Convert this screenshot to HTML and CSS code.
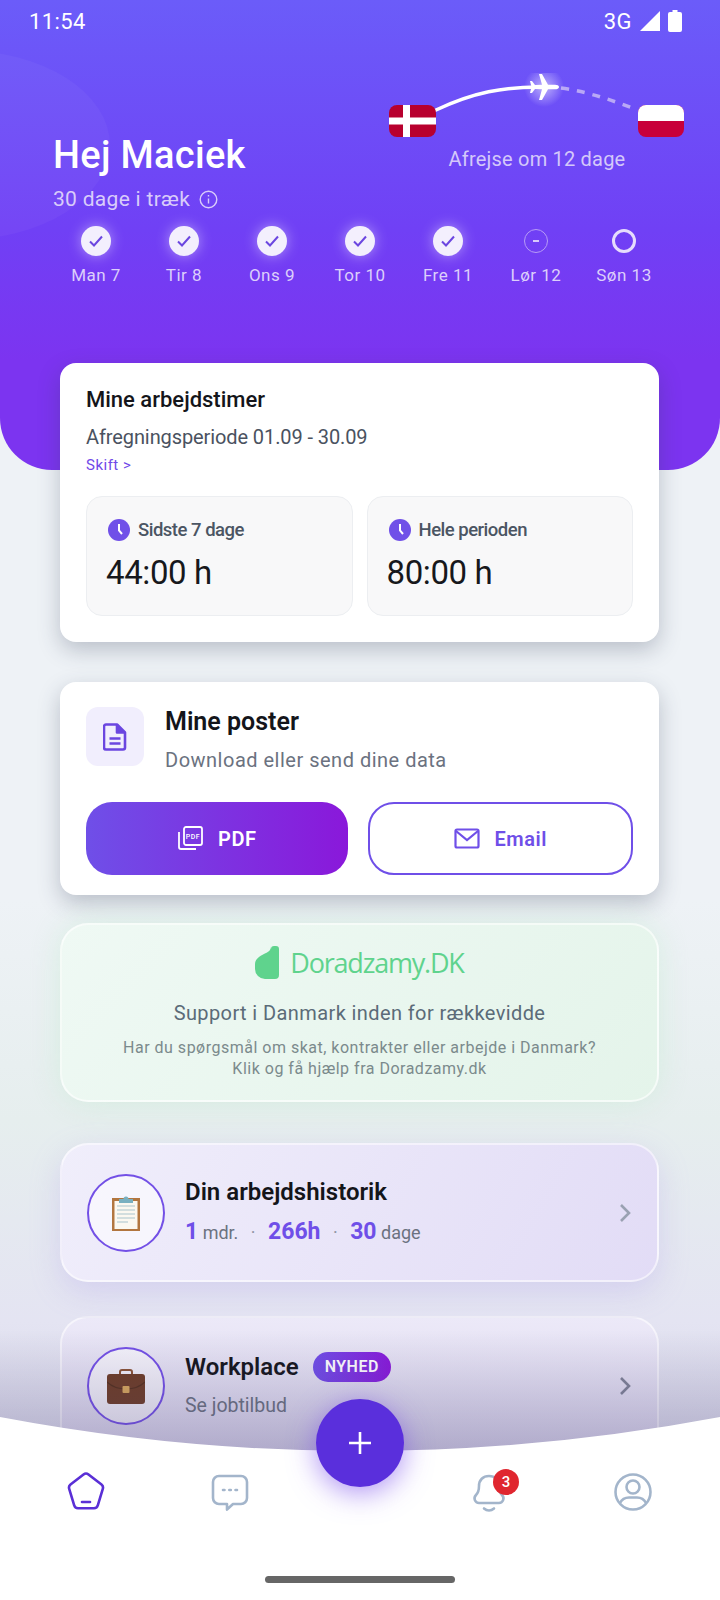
FILE: index.html
```html
<!DOCTYPE html>
<html lang="da">
<head>
    <meta charset="UTF-8">
    <meta name="viewport" content="width=device-width, initial-scale=1.0">
    <title>Hej Maciek</title>
    <link rel="stylesheet" href="styles.css">
</head>
<body>
<div class="screen">

    <header class="hero">
        <div class="status">
            <span>11:54</span>
            <div class="status-right">
                <span>3G</span>
                <svg width="22" height="22" viewBox="0 0 22 22"><path d="M21 1v20H1z" fill="#fff"/></svg>
                <svg width="14" height="22" viewBox="0 0 14 22"><path d="M4.500 0h5v2h2.500a2 2 0 0 1 2 2v16a2 2 0 0 1-2 2h-10a2 2 0 0 1-2-2v-16a2 2 0 0 1 2-2h2.500z" fill="#fff"/></svg>
            </div>
        </div>

        <div class="hero-top">
            <div class="greeting">
                <h1>Hej Maciek</h1>
                <p>30 dage i træk
                    <svg width="19" height="19" viewBox="0 0 19 19" fill="none" stroke="#d9ccfa" stroke-width="1.400"><circle cx="9.500" cy="9.500" r="8.300"/><path d="M9.500 8.500v5M9.500 5v1.600"/></svg>
                </p>
            </div>
            <div class="route">
                <svg class="route-map" width="296" height="66" viewBox="0 0 296 66">
                    <defs>
                        <radialGradient id="glow"><stop offset="0" stop-color="#fff" stop-opacity=".55"/><stop offset="1" stop-color="#fff" stop-opacity="0"/></radialGradient>
                    </defs>
                    <path d="M47 37C85 19 115 14 150 14" fill="none" stroke="#fff" stroke-width="3.500" stroke-linecap="round"/>
                    <path d="M172 15C200 19 222 27 246 36" fill="none" stroke="#b9a8f6" stroke-width="3.500" stroke-dasharray="8 8"/>
                    <circle cx="155" cy="14" r="20" fill="url(#glow)"/>
                    <path d="M170 14c0-1.500-2-2.300-4-2.300l-7 0-6-10.700h-3l3 10.700-7 .3-3-4h-2l1.500 6-1.500 6h2l3-4 7 .3-3 10.700h3l6-10.700 7 0c2 0 4-.8 4-2.300z" fill="#fff"/>
                    <g>
                        <rect x="0" y="32" width="47" height="32" rx="8" fill="#b8002e"/>
                        <path d="M14 32h7v32h-7zM0 44.500h47v7h-47z" fill="#fff"/>
                    </g>
                    <g>
                        <rect x="249" y="32" width="46" height="32" rx="8" fill="#c8003a"/>
                        <path d="M249 48v-8a8 8 0 0 1 8-8h30a8 8 0 0 1 8 8v8z" fill="#fff"/>
                    </g>
                </svg>
                <p>Afrejse om 12 dage</p>
            </div>
        </div>

        <ul class="days">
            <li><span class="dot done"><svg width="16" height="14" viewBox="0 0 16 14"><path d="M2 7.500l4 4 8-9" class="tick"/></svg></span>Man 7</li>
            <li><span class="dot done"><svg width="16" height="14" viewBox="0 0 16 14"><path d="M2 7.500l4 4 8-9" class="tick"/></svg></span>Tir 8</li>
            <li><span class="dot done"><svg width="16" height="14" viewBox="0 0 16 14"><path d="M2 7.500l4 4 8-9" class="tick"/></svg></span>Ons 9</li>
            <li><span class="dot done"><svg width="16" height="14" viewBox="0 0 16 14"><path d="M2 7.500l4 4 8-9" class="tick"/></svg></span>Tor 10</li>
            <li><span class="dot done"><svg width="16" height="14" viewBox="0 0 16 14"><path d="M2 7.500l4 4 8-9" class="tick"/></svg></span>Fre 11</li>
            <li><span class="dot off"><i></i></span>Lør 12</li>
            <li><span class="dot today"></span>Søn 13</li>
        </ul>
    </header>

    <main class="content">
        <section class="card hours">
            <h2>Mine arbejdstimer</h2>
            <p class="period">Afregningsperiode 01.09 - 30.09</p>
            <a class="switch">Skift &gt;</a>
            <div class="tiles">
                <div class="tile">
                    <div class="tile-head">
                        <svg width="22" height="22" viewBox="0 0 22 22"><circle cx="11" cy="11" r="11" fill="#7050e8"/><path d="M11 5v6.500l3 3.500" fill="none" stroke="#fff" stroke-width="2"/></svg>
                        Sidste 7 dage
                    </div>
                    <div class="tile-value">44:00 h</div>
                </div>
                <div class="tile">
                    <div class="tile-head">
                        <svg width="22" height="22" viewBox="0 0 22 22"><circle cx="11" cy="11" r="11" fill="#7050e8"/><path d="M11 5v6.500l3 3.500" fill="none" stroke="#fff" stroke-width="2"/></svg>
                        Hele perioden
                    </div>
                    <div class="tile-value">80:00 h</div>
                </div>
            </div>
        </section>

        <section class="card posters">
            <div class="posters-head">
                <div class="doc-box">
                    <svg width="24" height="28" viewBox="0 0 24 28" fill="none" stroke="#6b46e0" stroke-width="2.600" stroke-linejoin="round"><path d="M3 1.500h11l8 8v15a2 2 0 0 1-2 2h-17a2 2 0 0 1-2-2v-21a2 2 0 0 1 2-2z"/><path d="M14 1.500v8h8" fill="#6b46e0"/><path d="M6.500 15.500h11M6.500 20.500h11"/></svg>
                </div>
                <div>
                    <h2 class="posters-title">Mine poster</h2>
                    <p class="posters-sub">Download eller send dine data</p>
                </div>
            </div>
            <div class="buttons">
                <a class="btn btn-fill">
                    <svg width="26" height="25" viewBox="0 0 26 25" fill="none" stroke="#fff" stroke-width="1.800"><rect x="7" y="1" width="18" height="18" rx="2"/><path d="M2 6v15a2 2 0 0 0 2 2h15"/><text x="16" y="12.500" text-anchor="middle" class="pdf-mini">PDF</text></svg>
                    PDF
                </a>
                <a class="btn btn-line">
                    <svg width="26" height="21" viewBox="0 0 26 21" fill="none" stroke="#6f4fe8" stroke-width="2.200"><rect x="1.500" y="1.500" width="23" height="18" rx="1.500"/><path d="M2 3l11 9 11-9"/></svg>
                    Email
                </a>
            </div>
        </section>

        <section class="support">
            <div class="brand">
                <svg width="24" height="33" viewBox="0 0 24 33"><path d="M16 3a3 3 0 0 1 3-3h2a3 3 0 0 1 3 3v26a4 4 0 0 1-4 4h-10a10 10 0 0 1-10-10v-5c0-6 7-9 11-11 3-1.500 5-3 5-7z" fill="#5fd38d"/></svg>
                <span>Doradzamy.DK</span>
            </div>
            <h3>Support i Danmark inden for rækkevidde</h3>
            <p>Har du spørgsmål om skat, kontrakter eller arbejde i Danmark?<br>Klik og få hjælp fra Doradzamy.dk</p>
        </section>

        <section class="row-card history">
            <div class="avatar">
                <svg width="32" height="38" viewBox="0 0 32 38">
                    <rect x="2" y="4" width="28" height="33" fill="#b2763f"/>
                    <rect x="4.500" y="7" width="23" height="28" fill="#fbf8f0"/>
                    <path d="M7 12h18M7 16h18M7 20h18M7 24h18M7 28h11" stroke="#a9c4cc" stroke-width="1.200"/>
                    <path d="M9 9v-4h4.500a2.500 2.500 0 0 1 5 0h4.500v4z" fill="#79b0c0"/>
                </svg>
            </div>
            <div class="row-text">
                <h2>Din arbejdshistorik</h2>
                <p class="stats"><b>1</b> mdr. <i>·</i> <b>266h</b> <i>·</i> <b>30</b> dage</p>
            </div>
            <svg class="chevron" width="12" height="20" viewBox="0 0 12 20" fill="none" stroke="#9aa1b2" stroke-width="2.600"><path d="M2 2l8 8-8 8"/></svg>
        </section>

        <section class="row-card workplace">
            <div class="avatar">
                <svg width="38" height="36" viewBox="0 0 38 36">
                    <path d="M13 7V4a2 2 0 0 1 2-2h8a2 2 0 0 1 2 2v3" fill="none" stroke="#8a5334" stroke-width="2"/>
                    <path d="M3 6h32a3 3 0 0 1 3 3v24a3 3 0 0 1-3 3h-32a3 3 0 0 1-3-3v-24a3 3 0 0 1 3-3z" fill="#6e3d25"/>
                    <path d="M0 14c6 6 12 7 19 7s13-1 19-7" fill="none" stroke="#54301c" stroke-width="1.200"/>
                    <rect x="15.500" y="18" width="7" height="7" rx="1" fill="#d9a85a"/>
                </svg>
            </div>
            <div class="row-text">
                <h2>Workplace <span class="pill">NYHED</span></h2>
                <p class="job-sub">Se jobtilbud</p>
            </div>
            <svg class="chevron" width="12" height="20" viewBox="0 0 12 20" fill="none" stroke="#7f8296" stroke-width="2.600"><path d="M2 2l8 8-8 8"/></svg>
        </section>
    </main>

    <div class="fade"></div>

    <nav class="tabbar">
        <div class="tab-group">
            <svg width="40" height="40" viewBox="0 0 40 40" fill="none" stroke="#5a2fd6" stroke-width="2.600" stroke-linejoin="round" stroke-linecap="round"><path d="M17.500 2.500a4 4 0 0 1 5 0l13 10a4 4 0 0 1 1.300 4.300l-5 16.500a4 4 0 0 1-3.800 3h-16a4 4 0 0 1-3.800-3l-5-16.500a4 4 0 0 1 1.300-4.300z"/><path d="M16 30h8"/></svg>
            <svg width="40" height="40" viewBox="0 0 40 40" fill="none" stroke="#a3b5cb" stroke-width="2.600" stroke-linejoin="round"><path d="M9 4h22a6 6 0 0 1 6 6v16a6 6 0 0 1-6 6h-8l-6 5.500v-5.500h-8a6 6 0 0 1-6-6v-16a6 6 0 0 1 6-6z"/><path d="M13 18h1.500M19.300 18h1.500M25.500 18h1.500" stroke-linecap="round"/></svg>
        </div>
        <div class="tab-group">
            <div class="bell">
                <svg width="40" height="40" viewBox="0 0 40 40" fill="none" stroke="#a3b5cb" stroke-width="2.600" stroke-linecap="round"><path d="M20 4c-6 0-10 4-10 10 0 5-1 7-3 9-3 3-1 8 3 8h20c4 0 6-5 3-8-2-2-3-4-3-9 0-6-4-10-10-10z"/><path d="M15 36.500c3 2.500 7 2.500 10 0"/></svg>
                <span class="badge">3</span>
            </div>
            <svg width="40" height="40" viewBox="0 0 40 40" fill="none" stroke="#a3b5cb" stroke-width="2.600"><circle cx="20" cy="20" r="17.500"/><circle cx="20" cy="15" r="6.500"/><path d="M7 31c2-4 6-5.500 9-5.500h8c3 0 7 1.500 9 5.500"/></svg>
        </div>
    </nav>

    <a class="fab">
        <svg width="26" height="26" viewBox="0 0 26 26" stroke="#fff" stroke-width="2.600"><path d="M13 2v22M2 13h22"/></svg>
    </a>

    <div class="home-bar"></div>
</div>
</body>
</html>
```

FILE: styles.css
```css
* {
    box-sizing: border-box;
}

html, body {
    margin: 0;
    padding: 0;
}

body {
    font-family: Roboto, "Liberation Sans", sans-serif;
    background: #fff;
}

h1, h2, h3, p, ul {
    margin: 0;
    padding: 0;
}

.screen {
    position: relative;
    width: 720px;
    height: 1600px;
    overflow: hidden;
    background: linear-gradient(#eef2f6 0, #eef2f6 900px, #e6eeee 1120px, #e4e4f2 1320px, #d8d8e8 1480px);
}

/* top purple block */
.hero {
    position: relative;
    height: 470px;
    padding-top: 6px;
    border-radius: 0 0 52px 52px;
    background: linear-gradient(#6b5cf9 0, #7040f5 230px, #7c34f0 360px);
    overflow: hidden;
}

.hero::before {
    content: "";
    position: absolute;
    left: -190px;
    top: 50px;
    width: 300px;
    height: 190px;
    border-radius: 50%;
    background: rgba(255, 255, 255, .035);
}

.status {
    position: relative;
    display: flex;
    justify-content: space-between;
    align-items: center;
    height: 30px;
    padding: 0 38px 0 29px;
    color: #fff;
    font-size: 22px;
    letter-spacing: .4px;
}

.status-right {
    display: flex;
    align-items: center;
    gap: 7px;
}

.hero-top {
    position: relative;
    display: flex;
    justify-content: space-between;
    margin-top: 37px;
    padding: 0 35px 0 53px;
}

.greeting {
    padding-top: 60px;
}

.greeting h1 {
    color: #fff;
    font-size: 38px;
    line-height: 44px;
    font-weight: 500;
    letter-spacing: .3px;
}

.greeting p {
    display: flex;
    align-items: center;
    gap: 9px;
    margin-top: 7px;
    color: #d9ccfa;
    font-size: 21px;
    line-height: 30px;
    letter-spacing: .3px;
}

.route {
    width: 296px;
    text-align: center;
}

.route-map {
    display: block;
}

.route p {
    margin-top: 8px;
    color: #d4c8fa;
    font-size: 20px;
    line-height: 24px;
    letter-spacing: .2px;
}

.days {
    position: relative;
    display: grid;
    grid-template-columns: repeat(7, 88px);
    margin-top: 12px;
    padding-left: 52px;
    list-style: none;
}

.days li {
    display: flex;
    flex-direction: column;
    align-items: center;
    color: #dccffb;
    font-size: 17px;
    line-height: 22px;
    letter-spacing: .5px;
}

.dot {
    display: flex;
    align-items: center;
    justify-content: center;
    width: 30px;
    height: 30px;
    margin-bottom: 8px;
    border-radius: 50%;
}

.done {
    background: #f3effd;
    box-shadow: 0 0 14px rgba(255, 255, 255, .45);
}

.tick {
    fill: none;
    stroke: #6b46e0;
    stroke-width: 2;
}

.off {
    width: 24px;
    height: 24px;
    margin: 3px 0 11px;
    border: 1.500px solid #b79cf5;
}

.off i {
    width: 6px;
    height: 2px;
    background: #d8c9fa;
}

.today {
    width: 24px;
    height: 24px;
    margin: 3px 0 11px;
    border: 3.500px solid #e6dcfc;
}

/* cards */
.content {
    position: relative;
    display: flex;
    flex-direction: column;
    margin-top: -107px;
    padding: 0 61px 0 60px;
}

.card {
    padding: 0 26px;
    border-radius: 16px;
    background: #fff;
    box-shadow: 0 8px 22px rgba(50, 60, 85, .28);
}

.hours {
    height: 279px;
    padding-top: 23px;
}

.hours h2 {
    color: #14151a;
    font-size: 22px;
    line-height: 28px;
    font-weight: 500;
}

.period {
    margin-top: 9px;
    color: #4a5260;
    font-size: 20px;
    line-height: 28px;
    letter-spacing: -.1px;
}

.switch {
    display: block;
    margin-top: 4px;
    color: #7048e8;
    font-size: 15px;
    line-height: 20px;
    letter-spacing: .5px;
}

.tiles {
    display: flex;
    gap: 14px;
    margin-top: 21px;
}

.tile {
    flex: 1;
    height: 120px;
    padding: 22px 19px 0;
    border: 1.500px solid #eceef1;
    border-radius: 16px;
    background: #f8f8f9;
}

.tile-head {
    display: flex;
    align-items: center;
    gap: 8px;
    padding-left: 2px;
    color: #4b5563;
    font-size: 18.500px;
    font-weight: 500;
    letter-spacing: -.5px;
}

.tile-value {
    margin-top: 10px;
    color: #17181c;
    font-size: 33px;
    line-height: 44px;
    letter-spacing: -.4px;
}

.posters {
    height: 213px;
    margin-top: 40px;
    padding-top: 25px;
}

.posters-head {
    display: flex;
    gap: 21px;
}

.doc-box {
    display: flex;
    align-items: center;
    justify-content: center;
    width: 58px;
    height: 59px;
    border-radius: 12px;
    background: #f1eefd;
}

.posters-title {
    color: #14151a;
    font-size: 25px;
    line-height: 30px;
    font-weight: 600;
}

.posters-sub {
    margin-top: 10px;
    color: #6b7280;
    font-size: 20px;
    line-height: 26px;
    letter-spacing: .5px;
}

.buttons {
    display: flex;
    gap: 20px;
    margin-top: 29px;
}

.btn {
    flex: 1;
    display: flex;
    align-items: center;
    justify-content: center;
    gap: 15px;
    height: 73px;
    border-radius: 26px;
    font-size: 20px;
    font-weight: 600;
    letter-spacing: .5px;
}

.btn-fill {
    color: #fff;
    background: linear-gradient(90deg, #6f4fe8, #8a18da);
}

.btn-line {
    color: #6f4fe8;
    border: 2.500px solid #6f4fe8;
}

.pdf-mini {
    fill: #fff;
    stroke: none;
    font-family: Roboto, sans-serif;
    font-size: 7px;
    font-weight: 500;
}

.support {
    height: 179px;
    margin-top: 28px;
    padding-top: 20px;
    border: 2px solid rgba(255, 255, 255, .6);
    border-radius: 28px;
    background: linear-gradient(135deg, #eff9f4, #e4f4ea);
    box-shadow: 0 0 30px rgba(190, 235, 205, .45);
    text-align: center;
}

.brand {
    display: flex;
    align-items: flex-end;
    justify-content: center;
    gap: 11px;
    height: 34px;
    color: #5fd38d;
    font-family: "Open Sans", sans-serif;
    font-size: 27px;
    line-height: 33px;
    letter-spacing: -1.200px;
}

.support h3 {
    margin-top: 20px;
    color: #5b6b78;
    font-size: 20px;
    line-height: 28px;
    font-weight: 400;
    letter-spacing: .4px;
}

.support p {
    margin-top: 10px;
    color: #7b8a8c;
    font-size: 16px;
    line-height: 21px;
    letter-spacing: .5px;
}

.row-card {
    display: flex;
    align-items: center;
    height: 139px;
    padding: 0 26px;
    border: 2px solid rgba(255, 255, 255, .55);
    border-radius: 28px;
}

.history {
    margin-top: 41px;
    background: linear-gradient(120deg, #f0eefb, #e2dcf6);
    box-shadow: 0 10px 30px rgba(170, 150, 235, .28);
}

.workplace {
    height: 150px;
    margin-top: 34px;
    padding-bottom: 10px;
    background: linear-gradient(#ece9f8, #d8d4ea);
}

.avatar {
    display: flex;
    flex: none;
    align-items: center;
    justify-content: center;
    width: 78px;
    height: 78px;
    margin-left: -1px;
    border: 2.500px solid #7350e6;
    border-radius: 50%;
    background: rgba(255, 255, 255, .55);
}

.row-text {
    flex: 1;
    margin-left: 20px;
}

.row-text h2 {
    display: flex;
    align-items: center;
    gap: 14px;
    color: #14151a;
    font-size: 24px;
    line-height: 30px;
    font-weight: 600;
}

.stats {
    margin-top: 10px;
    color: #6b7280;
    font-size: 18px;
    line-height: 30px;
}

.stats b {
    color: #6f4fe8;
    font-size: 23px;
    font-weight: 700;
}

.stats i {
    margin: 0 8px;
    font-style: normal;
    opacity: .7;
}

.job-sub {
    margin-top: 10px;
    color: #6b7280;
    font-size: 19.500px;
    line-height: 28px;
}

.pill {
    padding: 0 12px;
    border-radius: 15px;
    color: #fff;
    background: linear-gradient(90deg, #6f4fe8, #8a18da);
    font-size: 16px;
    line-height: 30px;
    font-weight: 600;
    letter-spacing: .5px;
}

/* shade where the list runs under the tab bar */
.fade {
    position: absolute;
    left: 0;
    top: 1330px;
    width: 720px;
    height: 130px;
    background: linear-gradient(rgba(70, 60, 120, 0), rgba(70, 60, 120, .3));
}

.tabbar {
    position: absolute;
    left: 0;
    top: 1417px;
    display: flex;
    justify-content: space-between;
    width: 720px;
    height: 183px;
    padding: 55px 67px 0 66px;
    background: #fff;
    clip-path: path("M0 0Q360 68 720 0V183H0Z");
}

.tab-group {
    display: flex;
    gap: 104px;
}

.tab-group svg {
    display: block;
}

.bell {
    position: relative;
}

.badge {
    position: absolute;
    left: 24px;
    top: -3px;
    width: 26px;
    height: 26px;
    border-radius: 50%;
    color: #fff;
    background: #e0262f;
    font-size: 15px;
    line-height: 26px;
    font-weight: 500;
    text-align: center;
}

.fab {
    position: absolute;
    left: 316px;
    top: 1399px;
    display: flex;
    align-items: center;
    justify-content: center;
    width: 88px;
    height: 88px;
    border-radius: 50%;
    background: #5a2fdc;
    box-shadow: 0 6px 28px rgba(110, 60, 235, .55);
}

.home-bar {
    position: absolute;
    left: 265px;
    top: 1576px;
    width: 190px;
    height: 7px;
    border-radius: 4px;
    background: #666;
}
```
